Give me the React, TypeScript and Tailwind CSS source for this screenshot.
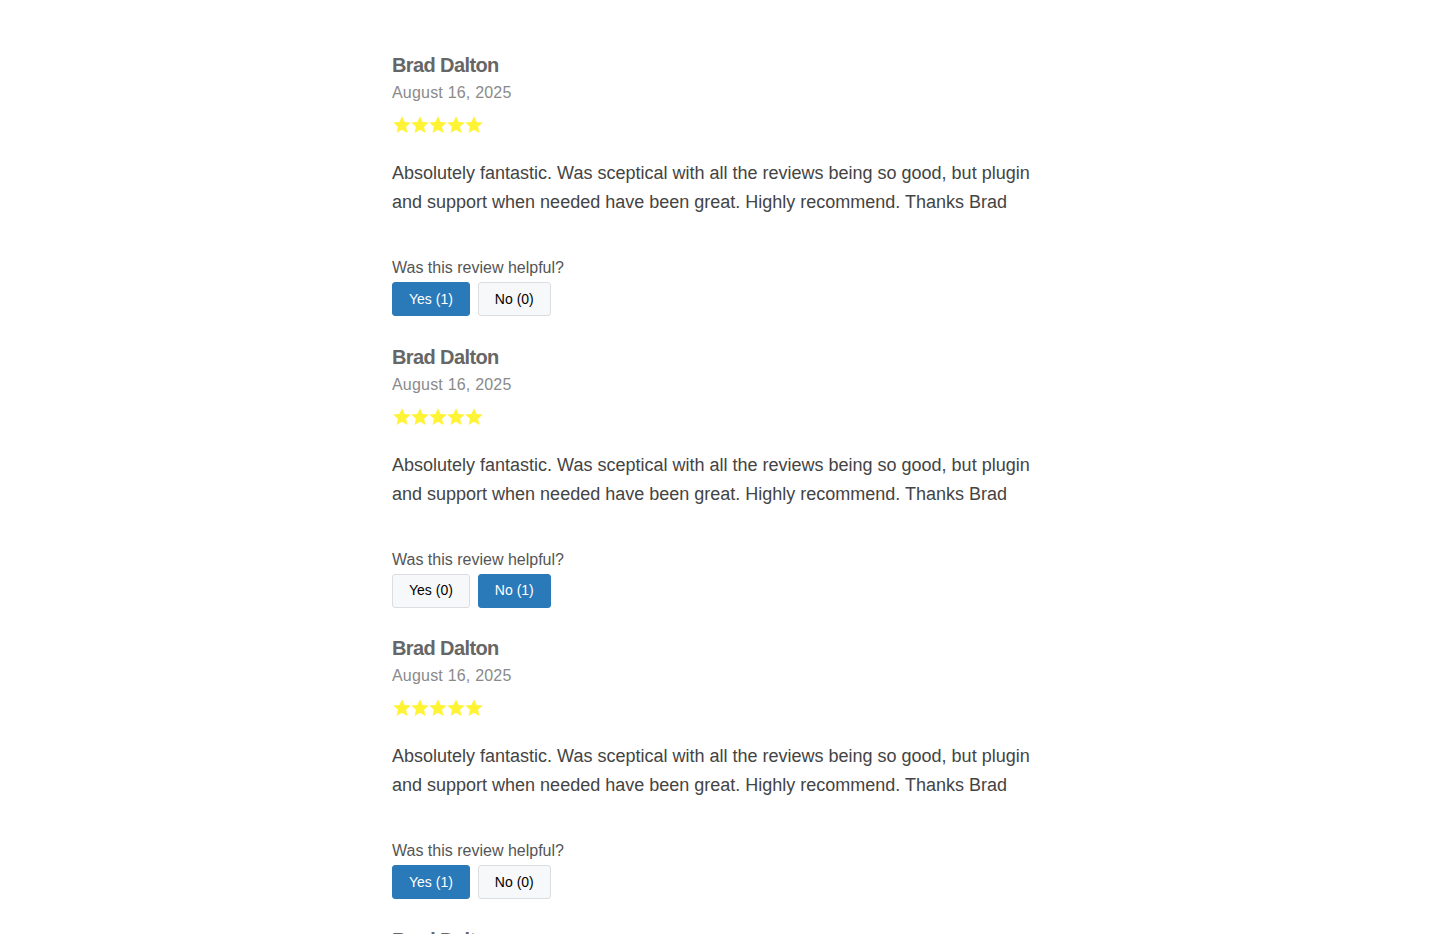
const reviews = [
  { name: "Brad Dalton", date: "August 16, 2025", yes: 1, no: 0, voted: "yes" },
  { name: "Brad Dalton", date: "August 16, 2025", yes: 0, no: 1, voted: "no" },
  { name: "Brad Dalton", date: "August 16, 2025", yes: 1, no: 0, voted: "yes" },
  { name: "Brad Dalton", date: "August 16, 2025", yes: 1, no: 0, voted: "yes" },
];

function Star() {
  return (
    <svg viewBox="0 0 24 24" className="w-[20px] h-[20px] -mr-[2px]" fill="#fff335">
      <path d="M12 1.5l3.1 6.8 7.4.8-5.6 5 1.6 7.4L12 17.8l-6.5 3.7 1.6-7.4-5.6-5 7.4-.8z" />
    </svg>
  );
}

function VoteButton({ label, active }: { label: string; active: boolean }) {
  return (
    <button
      className={
        active
          ? "h-[34px] px-4 rounded-[3px] border border-[#2a7ab9] bg-[#2a7ab9] text-white text-[14px]"
          : "h-[34px] px-4 rounded-[3px] border border-[#dcdde0] bg-[#f7f8f9] text-black text-[14px]"
      }
    >
      {label}
    </button>
  );
}

export default function App() {
  return (
    <div className="h-screen overflow-hidden bg-white font-['Liberation_Sans',Arial,sans-serif]">
      <div className="w-[652px] ml-[392px] pt-[52px]">
        {reviews.map((r, i) => (
          <div key={i} className="h-[291.5px]">
            <h3 className="text-[20px] font-bold text-[#666] leading-[26px] tracking-[-0.6px]">{r.name}</h3>
            <div className="text-[16px] text-[#8a8a8a] leading-[22px] mt-[4px] tracking-[0.2px]">{r.date}</div>
            <div className="flex mt-[11px]">
              {[0, 1, 2, 3, 4].map((s) => (
                <Star key={s} />
              ))}
            </div>
            <p className="text-[18px] text-[#444] leading-[29px] mt-[24px]">
              Absolutely fantastic. Was sceptical with all the reviews being so good, but plugin and support when
              needed have been great. Highly recommend. Thanks Brad
            </p>
            <div className="text-[16px] text-[#555] mt-[41px] leading-[20px]">Was this review helpful?</div>
            <div className="flex gap-2 mt-[4px]">
              <VoteButton label={`Yes (${r.yes})`} active={r.voted === "yes"} />
              <VoteButton label={`No (${r.no})`} active={r.voted === "no"} />
            </div>
          </div>
        ))}
      </div>
    </div>
  );
}
